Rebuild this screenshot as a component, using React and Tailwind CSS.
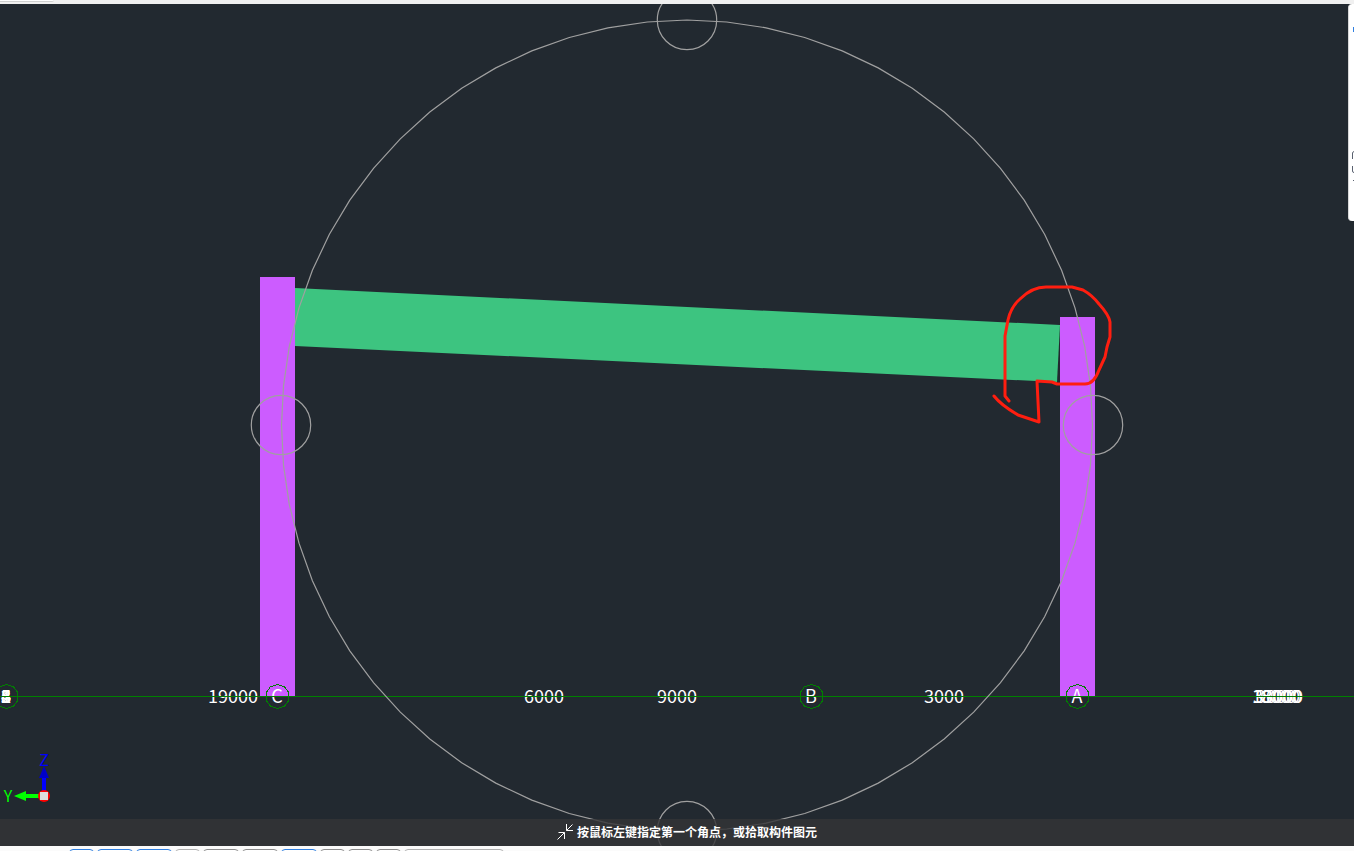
// Elevation view of a two-column frame with a sloped beam, axis grid and orbit ring.

const GRID_Y = 696;

const ORBIT = { cx: 687, cy: 425, r: 405 };

const ORBIT_HANDLES = [
  { cx: 687, cy: 20 },
  { cx: 281, cy: 425 },
  { cx: 1093, cy: 425 },
  { cx: 687, cy: 831 },
];

const AXES = [
  { x: 6, label: "" },
  { x: 277, label: "C" },
  { x: 811, label: "B" },
  { x: 1077, label: "A" },
];

const DIMENSIONS = [
  { x: 233, value: "19000" },
  { x: 544, value: "6000" },
  { x: 677, value: "9000" },
  { x: 944, value: "3000" },
  { x: 1277, value: "18000" },
  { x: 1278, value: "33000" },
  { x: 1280, value: "6000" },
  { x: 1276, value: "9000" },
];

// Axis labels seen edge-on, all stacked on the same spot
const STACKED_LABELS = ["1", "2", "3", "4", "5", "6", "8"];

const TOOL_BUTTONS = [
  { label: "捕捉", width: "w-[25px]", tone: "border-[#2f7fe0]" },
  { label: "正交", width: "w-9", tone: "border-[#2f7fe0]" },
  { label: "交点", width: "w-9", tone: "border-[#2f7fe0]" },
  { label: "垂点", width: "w-[25px]", tone: "border-[#b0b0b0]" },
  { label: "中点", width: "w-9", tone: "border-[#8c8c8c]" },
  { label: "顶点", width: "w-9", tone: "border-[#8c8c8c]" },
  { label: "坐标", width: "w-9", tone: "border-[#2f7fe0]" },
  { label: "端点", width: "w-[25px]", tone: "border-[#8c8c8c]" },
  { label: "圆心", width: "w-[25px]", tone: "border-[#8c8c8c]" },
  { label: "平行", width: "w-[25px]", tone: "border-[#8c8c8c]" },
  { label: "偏移", width: "w-[100px]", tone: "border-[#b0b0b0]" },
];

function polygonPoints(cx, cy, r, sides) {
  return Array.from({ length: sides }, (_, i) => {
    const a = (i / sides) * Math.PI * 2 - Math.PI / 2;
    return `${(cx + r * Math.cos(a)).toFixed(1)},${(cy + r * Math.sin(a)).toFixed(1)}`;
  }).join(" ");
}

function Frame() {
  return (
    <g>
      <path d="M295 288 L1060 325 L1057 382 L295 346 Z" fill="#3dc480" />
      <rect x="260" y="277" width="35" height="419" fill="#cc5cff" />
      <rect x="1060" y="317" width="35" height="379" fill="#cc5cff" />
    </g>
  );
}

function AxisGrid() {
  return (
    <g
      className="font-['Noto_Sans_CJK_SC',sans-serif] text-[18px]"
      textAnchor="middle"
      fill="#ffffff"
    >
      {AXES.map((axis) => (
        <g key={axis.x}>
          <polygon
            points={polygonPoints(axis.x + 0.5, GRID_Y + 0.5, 12, 10)}
            fill="none"
            stroke="#008000"
            shapeRendering="crispEdges"
          />
          <text x={axis.x} y="703">
            {axis.label}
          </text>
        </g>
      ))}
      {STACKED_LABELS.map((label) => (
        <text key={label} x="6" y="703">
          {label}
        </text>
      ))}
      {DIMENSIONS.map((dim) => (
        <text key={dim.x} x={dim.x} y="703">
          {dim.value}
        </text>
      ))}
      <path d="M0 696.5 H1354" stroke="#008000" />
    </g>
  );
}

function OrbitRing() {
  return (
    <g fill="none" stroke="#a0a0a0" strokeWidth="1.2">
      <polygon points={polygonPoints(ORBIT.cx, ORBIT.cy + 0.5, ORBIT.r + 0.5, 64)} />
      {ORBIT_HANDLES.map((h) => (
        <circle key={`${h.cx}-${h.cy}`} cx={h.cx} cy={h.cy} r="29.7" />
      ))}
    </g>
  );
}

function AxisTriad() {
  return (
    <g className="font-['Noto_Sans_CJK_SC',sans-serif] text-[16px]" textAnchor="middle">
      <text x="44" y="766" fill="#0000ff">
        Z
      </text>
      <text x="8" y="802" fill="#00ff00">
        Y
      </text>
      <path d="M42 794 V777 H46 V794 Z" fill="#0000ff" />
      <path d="M44 766 L49 778 H39 Z" fill="#0000c8" />
      <path d="M41 794 H25 V798 H41 Z" fill="#00ff00" />
      <path d="M14 796 L26 791 V801 Z" fill="#00ff00" />
      <circle cx="44" cy="796" r="6" fill="#ff0000" />
      <rect x="40" y="792" width="8" height="8" fill="#dcdcdc" />
    </g>
  );
}

function RedMarkup() {
  return (
    <path
      d="M1009 401 L1005 396 V336 L1008 320 Q1011 307 1020 299 Q1032 287 1046 287 H1072 L1083 290 Q1092 295 1099 304 Q1109 315 1110 322 V337 L1107 347 L1105 357 L1099 370 Q1094 384 1085 384 H1057 L1052 382 L1037 381 L1039 422 L1018 415 Q1001 405 994 396"
      fill="none"
      stroke="#ff1e10"
      strokeWidth="3"
      strokeLinecap="round"
      strokeLinejoin="round"
    />
  );
}

function PromptBar() {
  return (
    <div className="absolute inset-x-0 bottom-0 flex h-[27px] items-center justify-center gap-1 bg-[#353537]/80 pb-px pl-5 font-['Noto_Sans_CJK_SC',sans-serif] text-xs font-bold text-white">
      <svg viewBox="0 0 16 16" className="h-4 w-4" fill="none" stroke="#ffffff" aria-hidden="true">
        <path d="M15.5 0.5 L9.5 6.5 M9.5 0 V6.5 H16 M0.5 15.500 L7.500 8.500 M1.500 8.500 H7.500 V15" />
      </svg>
      <p>按鼠标左键指定第一个角点，或拾取构件图元</p>
    </div>
  );
}

function SidePanel() {
  return (
    <aside className="absolute right-0 top-0 h-[217px] w-[6px] overflow-hidden rounded-l-sm border-l border-[#d8d8d8] bg-white">
      <svg viewBox="0 0 5 217" className="h-full w-full" fill="none" aria-hidden="true">
        <path d="M4 23 H5 V28 H4 Z" fill="#2f7fe0" />
        <path d="M3.5 155 V149 Q3.5 148 5 147.5" stroke="#5a6270" />
        <path d="M3.5 162 V167 Q3.5 168.5 5 168.5" stroke="#5a6270" />
        <path d="M4 176.5 H5" stroke="#5a6270" />
      </svg>
    </aside>
  );
}

export default function App() {
  return (
    <div className="flex h-screen flex-col overflow-hidden bg-[#fbfbfb]">
      <header className="h-1 shrink-0 bg-[#f0f0f0]">
        <div className="h-[2px] w-[54px] rounded-br-sm border-b border-[#d0d0d0] bg-white" />
      </header>

      <main className="relative min-h-0 flex-1 bg-[#222930]">
        <svg
          viewBox="0 4 1354 842"
          preserveAspectRatio="xMidYMid slice"
          className="block h-full w-full"
          role="img"
          aria-label="Frame elevation"
        >
          <Frame />
          <AxisGrid />
          <OrbitRing />
          <AxisTriad />
          <RedMarkup />
        </svg>
        <SidePanel />
        <PromptBar />
      </main>

      <footer className="flex h-[5px] shrink-0 items-start gap-[3px] overflow-hidden pl-[69px] pt-[3px]">
        {TOOL_BUTTONS.map((btn) => (
          <button
            key={btn.label}
            type="button"
            aria-label={btn.label}
            className={`h-5 shrink-0 rounded-sm border bg-white ${btn.width} ${btn.tone}`}
          />
        ))}
      </footer>
    </div>
  );
}
